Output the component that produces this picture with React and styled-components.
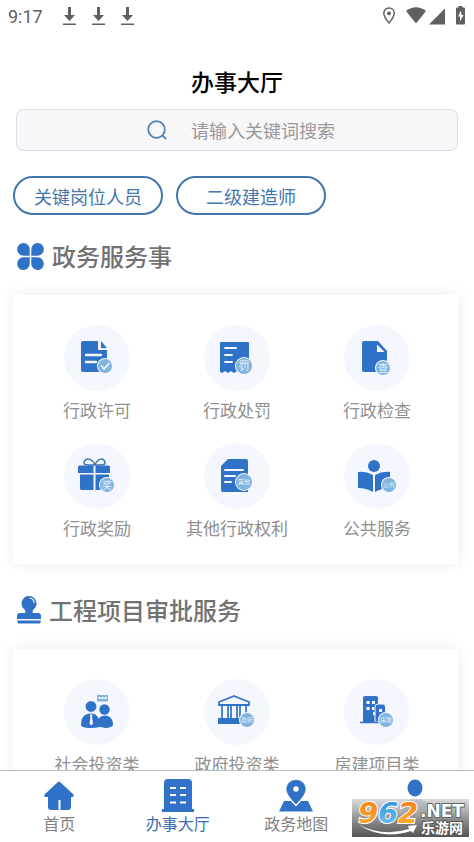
import React from "react";
import styled, { createGlobalStyle } from "styled-components";

const BLUE = "#3072c7";
const LIGHT = "#82b4de";
const PALE = "#f4f8fe";
const FONT = `"Noto Sans CJK SC", "Noto Sans", sans-serif`;

const Badge = ({ x, y, r = 8, text, size = 9 }) => (
  <g>
    <circle cx={x} cy={y} r={r + 1} fill={PALE} />
    <circle cx={x} cy={y} r={r} fill={LIGHT} />
    {text && (
      <text x={x} y={y + size * 0.37} fontSize={size} fill="#e6f5ff" textAnchor="middle" fontFamily={FONT}>
        {text}
      </text>
    )}
  </g>
);

const PermitIcon = () => (
  <svg viewBox="0 0 66 66">
    <path d="M19 16h15v9h9v22H19a2 2 0 0 1-2-2V18a2 2 0 0 1 2-2z" fill={BLUE} />
    <path d="M37 16l6 7h-6z" fill={BLUE} />
    <path d="M22 30h15M22 37h10" stroke={PALE} strokeWidth="2.4" strokeLinecap="round" />
    <Badge x={41} y={41} r={7} />
    <path d="M37.500 41l2.500 3 5-5.500" stroke="#fff" strokeWidth="1.400" fill="none" strokeLinecap="round" />
  </svg>
);

const PenaltyIcon = () => (
  <svg viewBox="0 0 66 66">
    <path d="M18 17h26q1 0 1 1v29l-3 1-3-2-3 2-3-2-3 2-3-2-3 2-3-2-3 2-2-1V18q0-1 1-1z" fill={BLUE} />
    <path d="M21 23h11M21 30h7M21 37h7" stroke={PALE} strokeWidth="1.8" strokeLinecap="round" />
    <Badge x={40} y={41} text="罚" size={11} />
  </svg>
);

const CheckIcon = () => (
  <svg viewBox="0 0 66 66">
    <path d="M20 16h14l9 10v21H20a2 2 0 0 1-2-2V18a2 2 0 0 1 2-2z" fill={BLUE} />
    <path d="M33 19.500l7.500 7.500H33z" fill="#fff" />
    <Badge x={39} y={43} r={7} text="查" size={10} />
  </svg>
);

const RewardIcon = () => (
  <svg viewBox="0 0 66 66">
    <path
      d="M31 22c-3-8-11-7-11-2 0 2 2 2 11 2zM31 22c3-8 10-7 10-2 0 2-2 2-10 2z"
      fill="none"
      stroke="#3f74a8"
      strokeWidth="1.5"
    />
    <path d="M15 22.500h14.500v7.500H14v-6.500zM31.500 22.500H45l1 1V30H31.500zM16 31.500h13.500V47H17l-1-1zM31.500 31.500H45V47H31.500z" fill={BLUE} />
    <Badge x={43} y={42} r={7} text="奖" size={10} />
  </svg>
);

const OtherIcon = () => (
  <svg viewBox="0 0 66 66">
    <path d="M24 16h18a2 2 0 0 1 2 2v31H19a2 2 0 0 1-2-2V23z" fill={BLUE} />
    <path d="M21 27h18M21 33h10M21 39h6" stroke={PALE} strokeWidth="2" strokeLinecap="round" />
    <Badge x={40} y={39} text="其他" size={6} />
  </svg>
);

const PublicIcon = () => (
  <svg viewBox="0 0 66 66">
    <circle cx="30" cy="23" r="6" fill={BLUE} />
    <path d="M14 29q8-1 15 3v17q-7-4-15-4zM46 29q-8-1-15 3v17q7-4 15-4z" fill={BLUE} />
    <Badge x={45} y={42} r={7} text="公共" size={6} />
  </svg>
);

const SocialIcon = () => (
  <svg viewBox="0 0 66 66">
    <circle cx="40.500" cy="30.500" r="5.200" fill={BLUE} />
    <path d="M33 47c0-7 3-10.500 8-10.500s8 4 8 9c0 2-4 3.500-8 3.500z" fill={BLUE} />
    <circle cx="27" cy="27.500" r="5.700" fill={BLUE} stroke={PALE} strokeWidth=".6" />
    <path d="M17 46c0-8 4-11.500 10-11.500S36 39 36 48q-4 1-10 1c-5 0-9-1-9-3z" fill={BLUE} />
    <path d="M26 35.500h2.500l-.5 3 1 6-1.700 2-1.800-2 1-6z" fill="#fff" />
    <path d="M33 16h11v6.500H33z" fill={LIGHT} />
    <path d="M34.500 19h2M37.500 19h2M40.500 19h2" stroke="#fff" strokeWidth="2" />
  </svg>
);

const GovernmentIcon = () => (
  <svg viewBox="0 0 66 66">
    <path d="M30 17l15 6v3H15v-3z" fill="none" stroke={BLUE} strokeWidth="1.800" strokeLinejoin="round" />
    <path d="M18 27v12M24 27v12M27 27v12M33 27v12M36 27v12M42 27v12" stroke={BLUE} strokeWidth="1.700" />
    <path d="M14 39h32v6H14z" fill={BLUE} />
    <Badge x={43} y={41} r={7} text="政府" size={6} />
  </svg>
);

const HousingIcon = () => (
  <svg viewBox="0 0 66 66">
    <path d="M19 43V19q0-2 2-2h11q2 0 2 2v24z" fill={BLUE} />
    <path d="M31 43V28q0-3 3-3h5q2.500 0 2.500 3v15z" fill={BLUE} stroke={PALE} />
    <path d="M16 43.500h22" stroke={BLUE} strokeWidth="1.500" />
    <path d="M22.500 22h3v3h-3zM28 22h3v3h-3zM22.500 28h3v3h-3zM28 28h2v3h-2zM35 30h3v3h-3zM29 33h2v3h-2z" fill="#fff" />
    <Badge x={42} y={41} r={7} text="房建" size={6} />
  </svg>
);

const CloverIcon = () => (
  <svg width="27" height="27" viewBox="0 0 27 27" fill={BLUE}>
    <path d="M6.500 0A6.300 6.300 0 0 1 12.700 6.500v6.200H6.500A6.300 6.300 0 0 1 6.500 0z" />
    <path d="M20.500 0A6.300 6.300 0 0 0 14.300 6.500v6.200h6.200A6.300 6.300 0 0 0 20.500 0z" />
    <path d="M6.500 27a6.300 6.300 0 0 0 6.200-6.500v-6.200H6.500A6.300 6.300 0 0 0 6.500 27z" />
    <path d="M20.500 27a6.300 6.300 0 0 1-6.200-6.500v-6.200h6.200a6.300 6.300 0 0 1 0 12.700z" />
  </svg>
);

const StampIcon = () => (
  <svg width="24" height="28" viewBox="0 0 24 28" fill={BLUE}>
    <path d="M12 0a7.500 7.500 0 0 1 5 13c-2 2-2 4 0 4h4q3 0 3 3v3H0v-3q0-3 3-3h4c2 0 2-2 0-4a7.500 7.500 0 0 1 5-13z" />
    <path d="M0 24.500h24l-1 3H1z" />
    <path d="M13 2c2.500.5 4 2 4 4.500" fill="none" stroke="#fff" strokeWidth="1.200" strokeLinecap="round" />
  </svg>
);

const DownloadIcon = () => (
  <svg width="13" height="19" viewBox="0 0 13 19" fill="#606060">
    <path d="M5 0h3v8h4l-5.500 6L1 8h4zM0 16.500h13V18H0z" />
  </svg>
);

const HomeIcon = () => (
  <svg width="34" height="34" viewBox="0 0 34 34" fill={BLUE}>
    <path d="M16 4q1-1 2 0l13 12q2 3-1 3h-1v10q0 3-3 3h-7.500V22h-2v10H9q-3 0-3-3V19H4q-3 0-1-3z" />
  </svg>
);

const HallIcon = () => (
  <svg width="34" height="34" viewBox="0 0 34 34">
    <path d="M3 31V5q0-4 4-4h20q4 0 4 4v26h2v3H1v-3z" fill={BLUE} />
    <path d="M9 10h6M19 10h6M9 17h6M19 17h6M9 24.500h6M19 24.500h6" stroke="#fff" strokeWidth="2.200" />
  </svg>
);

const MapIcon = () => (
  <svg width="34" height="34" viewBox="0 0 34 34">
    <path d="M5 23h24l5 10.500H0z" fill={BLUE} />
    <path d="M17 1c6 0 10.500 4.500 10.500 10 0 6-6 12-10.500 16.500C12.500 23 6.500 17 6.500 11 6.500 5.500 11 1 17 1z" fill={BLUE} stroke="#fff" strokeWidth="1.500" />
    <circle cx="17" cy="11" r="2.800" fill="#fff" />
  </svg>
);

const MineIcon = () => (
  <svg width="34" height="34" viewBox="0 0 34 34" fill={BLUE}>
    <ellipse cx="17" cy="10" rx="7.500" ry="8.500" />
    <path d="M3 34q0-13 14-13t14 13z" />
  </svg>
);

const services = [
  { name: "行政许可", Icon: PermitIcon },
  { name: "行政处罚", Icon: PenaltyIcon },
  { name: "行政检查", Icon: CheckIcon },
  { name: "行政奖励", Icon: RewardIcon },
  { name: "其他行政权利", Icon: OtherIcon },
  { name: "公共服务", Icon: PublicIcon },
];

const projects = [
  { name: "社会投资类", Icon: SocialIcon },
  { name: "政府投资类", Icon: GovernmentIcon },
  { name: "房建项目类", Icon: HousingIcon },
];

const ServiceCard = ({ items }) => (
  <Card>
    {items.map(({ name, Icon }) => (
      <Service href="#" key={name}>
        <Circle>
          <Icon />
        </Circle>
        <span>{name}</span>
      </Service>
    ))}
  </Card>
);

const StatusBar = () => (
  <Status>
    <Time>9:17</Time>
    <Downloads>
      <DownloadIcon />
      <DownloadIcon />
      <DownloadIcon />
    </Downloads>
    <svg width="83" height="20" viewBox="0 0 83 20" fill="#606060">
      <path d="M6 2C3 2 .8 4.300.8 7.200c0 3.500 5.200 9.800 5.200 9.800s5.200-6.300 5.200-9.800C11.200 4.300 9 2 6 2z" fill="none" stroke="#606060" strokeWidth="1.500" />
      <circle cx="6" cy="7.300" r="1.900" />
      <path d="M33 17.500L23 5q10-7.500 20 0z" />
      <path d="M46 18.500L62 2.500v16z" />
      <path d="M74 1.500h1.500V0h4v1.500H81q1 0 1 1v15q0 1-1 1h-7q-1 0-1-1v-15q0-1 1-1z" />
      <path d="M78 4.500l-3 6h2v5l3.500-6.500h-2z" fill="#fff" />
    </svg>
  </Status>
);

const Watermark = () => (
  <WatermarkBox viewBox="0 0 117 38">
    <defs>
      <linearGradient id="plate" x2="0" y2="1">
        <stop offset="0" stopColor="#d4d4d4" stopOpacity=".85" />
        <stop offset=".5" stopColor="#939393" />
        <stop offset="1" stopColor="#555" />
      </linearGradient>
      <linearGradient id="orange" x2="0" y2="1">
        <stop offset="0" stopColor="#f47a12" />
        <stop offset="1" stopColor="#ffb43a" />
      </linearGradient>
      <linearGradient id="sky" x2="0" y2="1">
        <stop offset="0" stopColor="#238bdc" />
        <stop offset="1" stopColor="#79c8f5" />
      </linearGradient>
    </defs>
    <path d="M0 0h117v38H0z" fill="url(#plate)" />
    <g fontFamily={`"DejaVu Sans", sans-serif`} fontWeight="700" stroke="#fff" paintOrder="stroke">
      <g fontSize="29" fontStyle="italic" strokeWidth="2">
        <text x="6" y="24" fill="url(#orange)">9</text>
        <text x="26" y="24" fill="url(#sky)">6</text>
        <text x="46" y="24" fill="url(#orange)">2</text>
      </g>
      <text x="68" y="18" fontSize="17" fill="#fff" stroke="#666" strokeWidth="2">.NET</text>
    </g>
    <path d="M7 26q24 12 50 4l-1-3 9-1-4 8-2-2Q30 41 7 26z" fill="#fff" />
    <text x="69" y="34" fontSize="14" fontWeight="700" fontFamily={FONT} fill="#fff" stroke="#555" strokeWidth="2" paintOrder="stroke">
      乐游网
    </text>
  </WatermarkBox>
);

const App = () => {
  return (
    <Page>
      <GlobalStyle />
      <StatusBar />
      <Content>
        <PageTitle>办事大厅</PageTitle>
        <Search>
          <svg width="20" height="20" viewBox="0 0 20 20" fill="none" stroke="#4a7db5" strokeWidth="1.700" strokeLinecap="round">
            <circle cx="9.500" cy="9.500" r="8.300" />
            <path d="M15.500 15.500l3.200 3.200" />
          </svg>
          <input type="text" aria-label="搜索" placeholder="请输入关键词搜索" />
        </Search>
        <Tags>
          <Tag>关键岗位人员</Tag>
          <Tag>二级建造师</Tag>
        </Tags>
        <Heading>
          <CloverIcon />
          政务服务事
        </Heading>
        <ServiceCard items={services} />
        <Heading>
          <StampIcon />
          工程项目审批服务
        </Heading>
        <ServiceCard items={projects} />
      </Content>
      <TabBar>
        <Tab href="#">
          <HomeIcon />
          首页
        </Tab>
        <Tab href="#" $active>
          <HallIcon />
          办事大厅
        </Tab>
        <Tab href="#">
          <MapIcon />
          政务地图
        </Tab>
        <Tab href="#" aria-label="我的">
          <MineIcon />
        </Tab>
        <Watermark />
      </TabBar>
    </Page>
  );
};

export default App;

const GlobalStyle = createGlobalStyle`
  body {
    margin: 0;
    background: #fff;
    font-family: ${FONT};
  }
  * {
    box-sizing: border-box;
  }
`;
const Page = styled.div`
  display: flex;
  flex-direction: column;
  height: 100vh;
`;
const Status = styled.div`
  display: flex;
  align-items: center;
  height: 32px;
  padding: 0 8px;
  flex-shrink: 0;
`;
const Time = styled.span`
  font-family: Roboto, sans-serif;
  font-size: 18px;
  color: #606060;
`;
const Downloads = styled.div`
  display: flex;
  gap: 16px;
  margin-left: 20px;
  flex: 1;
`;
const Content = styled.main`
  flex: 1;
  min-height: 0;
  overflow-y: auto;
  scrollbar-width: none;
  padding: 0 16px 20px 13px;
`;
const PageTitle = styled.h1`
  margin: 32px 0 11px;
  padding-left: 3px;
  font-size: 23px;
  line-height: 34px;
  font-weight: 500;
  text-align: center;
  color: #000;
`;
const Search = styled.label`
  display: flex;
  align-items: center;
  justify-content: center;
  gap: 24px;
  height: 42px;
  margin-left: 3px;
  padding-left: 12px;
  border: 1px solid #dadeea;
  border-radius: 7px;
  background: #f7f7f9;
  input {
    width: 148px;
    padding: 0;
    border: none;
    outline: none;
    background: transparent;
    font-family: inherit;
    font-size: 18px;
    color: #333;
  }
  input::placeholder {
    color: #999;
    opacity: 1;
  }
`;
const Tags = styled.div`
  display: flex;
  gap: 13px;
  margin-top: 25px;
`;
const Tag = styled.button`
  width: 150px;
  height: 39px;
  padding: 0;
  border: 2px solid #4377ac;
  border-radius: 20px;
  background: #fff;
  font-family: inherit;
  font-size: 18px;
  color: #4377ac;
`;
const Heading = styled.h2`
  display: flex;
  align-items: center;
  gap: 8px;
  margin: 25px 0 23px;
  padding-left: 4px;
  font-size: 24px;
  line-height: 32px;
  font-weight: 500;
  color: #727272;
`;
const Card = styled.div`
  display: grid;
  grid-template-columns: repeat(3, 1fr);
  row-gap: 21px;
  padding: 30px 11px 24px 14px;
  margin-bottom: 30px;
  background: #fff;
  box-shadow: 0 0 14px rgba(0, 0, 0, 0.08);
`;
const Service = styled.a`
  display: flex;
  flex-direction: column;
  align-items: center;
  gap: 7px;
  font-size: 17px;
  line-height: 24px;
  white-space: nowrap;
  text-decoration: none;
  color: #909090;
`;
const Circle = styled.div`
  width: 66px;
  height: 66px;
  border-radius: 50%;
  background: ${PALE};
  svg {
    display: block;
  }
`;
const TabBar = styled.nav`
  position: relative;
  display: grid;
  grid-template-columns: repeat(4, 1fr);
  flex-shrink: 0;
  height: 72px;
  padding-top: 7px;
  border-top: 1px solid #bcbcbc;
  background: #fff;
`;
const Tab = styled.a`
  display: flex;
  flex-direction: column;
  align-items: center;
  font-size: 16px;
  line-height: 22px;
  text-decoration: none;
  color: ${(props) => (props.$active ? "#3a6fae" : "#808080")};
`;
const WatermarkBox = styled.svg`
  position: absolute;
  right: 5px;
  bottom: 5px;
  width: 117px;
  height: 38px;
`;
